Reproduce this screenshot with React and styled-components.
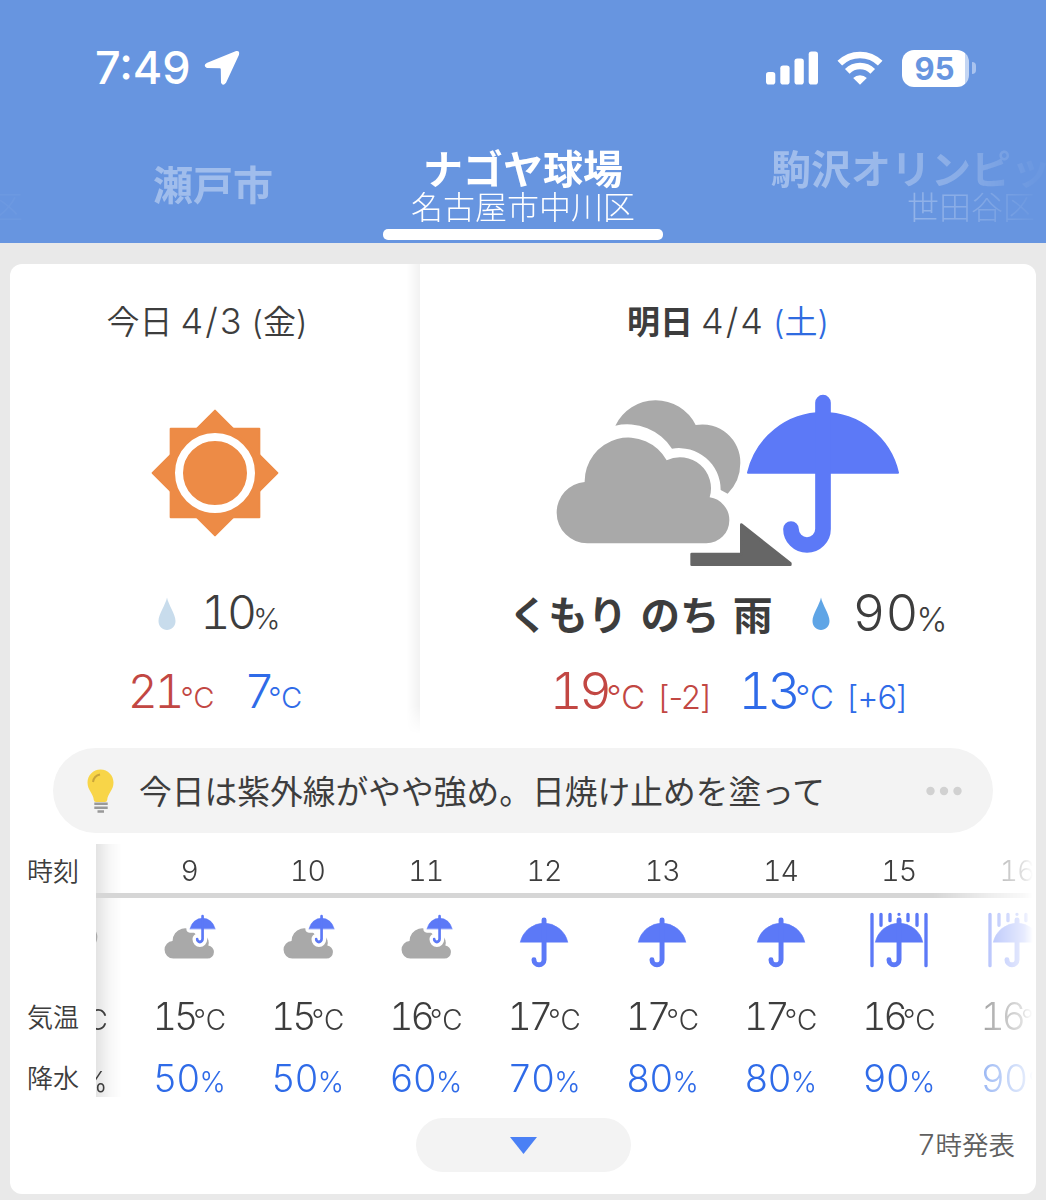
import React from 'react';
import styled, { createGlobalStyle } from 'styled-components';

const GlobalStyle = createGlobalStyle`
  * {
    box-sizing: border-box;
  }

  body {
    margin: 0;
    background-color: #e9e9e9;
    color: #3d3d3d;
    font-family: Inter, 'Noto Sans CJK JP', sans-serif;
    font-weight: 300;
  }
`;

const Screen = styled.div`
  display: flex;
  flex-direction: column;
  width: 1046px;
  height: 1200px;
  overflow: hidden;
  background-color: #e9e9e9;
`;

const Header = styled.header`
  display: flex;
  flex-direction: column;
  height: 243px;
  background-color: #6795e0;
  color: white;
`;

const StatusBar = styled.div`
  display: flex;
  align-items: center;
  height: 136px;
  padding: 0 70px 0 95px;
`;

const Clock = styled.span`
  margin-right: 13px;
  font-size: 45px;
  font-weight: 550;
  line-height: 136px;
`;

const StatusIcons = styled.div`
  display: flex;
  align-items: center;
  gap: 19px;
  margin-left: auto;
`;

const Battery = styled.div`
  display: flex;
  align-items: center;
  gap: 3px;
`;

const BatteryBody = styled.div`
  width: 67px;
  height: 37px;
  border-radius: 12px;
  background: linear-gradient(to right, white 94%, #c3d5f3 94%);
  color: #6795e0;
  font-size: 31px;
  font-weight: 650;
  line-height: 37px;
  text-align: center;
  padding-right: 2px;
`;

const BatteryCap = styled.div`
  width: 4px;
  height: 12px;
  border-radius: 0 4px 4px 0;
  background-color: #a9c3ef;
`;

const Tabs = styled.nav`
  display: flex;
  height: 107px;
  overflow: hidden;
  mask-image: linear-gradient(
    to right,
    rgba(0, 0, 0, 0.1) 20px,
    black 160px,
    black 840px,
    rgba(0, 0, 0, 0.55) 970px,
    rgba(0, 0, 0, 0.08) 1035px
  );
`;

const Tab = styled.div`
  display: flex;
  flex-direction: column;
  flex: none;
  align-items: center;
  width: ${(props) => props.$width}px;
  margin-right: 30px;
  padding-top: ${(props) => props.$top}px;
  color: ${(props) => (props.$active ? 'white' : 'rgba(255, 255, 255, 0.38)')};
  white-space: nowrap;
`;

const EdgeTab = styled(Tab)`
  align-items: flex-end;
  margin-right: 50px;
`;

const TabName = styled.div`
  height: 40px;
  font-size: 40px;
  font-weight: 700;
  line-height: 42px;
`;

const TabArea = styled.div`
  height: 38px;
  font-size: 32px;
  line-height: 38px;
`;

const TabLine = styled.div`
  width: 280px;
  height: 11px;
  margin-top: 2px;
  border-radius: 5px;
  background-color: white;
`;

const Card = styled.main`
  display: flex;
  flex-direction: column;
  width: 1026px;
  height: 930px;
  margin: 21px 10px 0;
  border-radius: 12px;
  background-color: white;
  overflow: hidden;
`;

const Days = styled.section`
  display: flex;
  height: 484px;
`;

const Day = styled.div`
  display: flex;
  flex-direction: column;
  width: ${(props) => props.$width}px;
`;

const PanelShade = styled.div`
  width: 14px;
  height: 470px;
  margin-left: -14px;
  background: linear-gradient(to right, rgba(0, 0, 0, 0), rgba(0, 0, 0, 0.05));
  mask-image: linear-gradient(to bottom, black 94%, transparent);
`;

const DateRow = styled.div`
  display: flex;
  align-items: baseline;
  justify-content: center;
  gap: 8px;
  height: 114px;
  padding-right: ${(props) => props.$shift || 0}px;
  font-size: 33px;
  font-weight: 350;
  line-height: 115px;
`;

const DayName = styled.span`
  font-weight: ${(props) => (props.$bold ? 700 : 350)};
`;

const DayNumber = styled.span`
  font-size: 36px;
  font-weight: 300;
  letter-spacing: 2px;
`;

const Weekday = styled.span`
  color: ${(props) => (props.$saturday ? '#2f6be0' : '#3d3d3d')};
`;

const IconRow = styled.div`
  display: flex;
  align-items: center;
  justify-content: center;
  height: 190px;
  padding-top: ${(props) => props.$drop}px;
`;

const RainRow = styled.div`
  display: flex;
  align-items: center;
  justify-content: center;
  height: 90px;
  padding-top: 5px;
  padding-left: ${(props) => props.$indent || 0}px;
`;

const TempRow = styled.div`
  display: flex;
  align-items: center;
  justify-content: center;
  gap: ${(props) => props.$gap}px;
  height: 70px;
  padding-top: 3px;
`;

const Telop = styled.span`
  margin-right: 40px;
  font-size: 39.5px;
  font-weight: 700;
  line-height: 90px;
  word-spacing: 4px;
`;

const Value = styled.span`
  display: flex;
  align-items: baseline;
  color: ${(props) => props.$color || '#3d3d3d'};
  font-size: ${(props) => props.$size}px;
  font-variant-numeric: tabular-nums;
  letter-spacing: ${(props) => props.$tight || 0}em;
  line-height: 70px;
`;

const Unit = styled.span`
  margin-left: ${(props) => props.$gap || 0}px;
  font-size: ${(props) => props.$size}px;
  letter-spacing: 0;
`;

const Diff = styled.span`
  margin-left: 13px;
  font-size: 32.5px;
  font-variant-numeric: normal;
  letter-spacing: -1px;
`;

const Tip = styled.section`
  display: flex;
  align-items: center;
  width: 940px;
  height: 85px;
  margin: 0 43px;
  padding: 0 31px 0 34px;
  border-radius: 43px;
  background-color: #f3f3f3;
`;

const TipText = styled.p`
  flex: 1;
  margin: 0 0 0 25px;
  padding-top: 3px;
  font-size: 32.75px;
  font-weight: 400;
  line-height: 85px;
  white-space: nowrap;
`;

const Hourly = styled.section`
  display: flex;
  height: 253px;
  margin-top: 11px;
`;

const Labels = styled.div`
  flex: none;
  width: 86px;
  padding-left: 17px;
  font-size: 26px;
  font-weight: 350;
`;

const HourScroll = styled.div`
  display: flex;
  width: 940px;
  overflow: hidden;
  background: linear-gradient(to right, rgba(0, 0, 0, 0.11), rgba(0, 0, 0, 0.03) 14px, rgba(0, 0, 0, 0) 26px);
  mask-image: linear-gradient(
    to right,
    black 837px,
    rgba(0, 0, 0, 0.42) 893px,
    rgba(0, 0, 0, 0.15) 928px,
    transparent 937px
  );
`;

const HourStrip = styled.div`
  display: flex;
  flex: none;
  margin-left: -84px;
`;

const HourColumn = styled.div`
  flex: none;
  width: 118.25px;
`;

const Cell = styled.div`
  display: flex;
  align-items: center;
  justify-content: center;
  height: ${(props) => props.$height}px;
`;

const LabelCell = styled(Cell)`
  justify-content: flex-start;
`;

const HourCell = styled(Cell)`
  padding-top: 4px;
  font-size: 28.5px;
  font-variant-numeric: tabular-nums;
  letter-spacing: -0.03em;
`;

const Rule = styled.div`
  height: 5px;
  background-color: #d6d6d6;
`;

const Footer = styled.footer`
  display: grid;
  grid-template-columns: 1fr 215px 1fr;
  align-items: center;
  height: 54px;
  margin-top: 21px;
`;

const MoreButton = styled.button`
  display: flex;
  align-items: center;
  justify-content: center;
  grid-column: 2;
  height: 54px;
  border: none;
  border-radius: 27px;
  background-color: #f3f3f3;
`;

const Updated = styled.span`
  padding-right: 21px;
  color: #606060;
  font-size: 26.5px;
  font-weight: 350;
  line-height: 50px;
  text-align: right;
`;

const UpdatedHour = styled.span`
  margin-right: 1px;
  font-size: 29px;
  font-weight: 300;
`;

const RED = '#c24743';
const BLUE = '#2f6be8';

const hours = [
  { hour: '', icon: 'cloudy', temp: 14, rain: 30 },
  { hour: '9', icon: 'cloudRain', temp: 15, rain: 50 },
  { hour: '10', icon: 'cloudRain', temp: 15, rain: 50 },
  { hour: '11', icon: 'cloudRain', temp: 16, rain: 60 },
  { hour: '12', icon: 'rain', temp: 17, rain: 70 },
  { hour: '13', icon: 'rain', temp: 17, rain: 80 },
  { hour: '14', icon: 'rain', temp: 17, rain: 80 },
  { hour: '15', icon: 'heavy', temp: 16, rain: 90 },
  { hour: '16', icon: 'heavy', temp: 16, rain: 90 },
];

const FRONT_CLOUD =
  'M173 522 A92 92 0 0 1 81 430 A92 92 0 0 1 165 338 A131 131 0 0 1 411 273 A93 93 0 0 1 540 384 A69 69 0 0 1 599 453 A69 69 0 0 1 530 522 Z';
const BACK_CLOUD =
  'M257 169 A134 134 0 0 1 498 167 A114 114 0 0 1 632 281 A130 130 0 0 1 594 373 L573 362 A125 125 0 0 0 427 238 A161 161 0 0 0 257 169 Z';
const CANOPY = 'M655 310 A231 231 0 0 1 1105 310 Z';
const HANDLE = 'M880 100 V479 A48 48 0 0 1 784 479';

function Umbrella({ color = '#5c79f7', halo = 0 }) {
  return (
    <g stroke={color} strokeLinecap="round" strokeLinejoin="round">
      <path d={CANOPY} fill={color} strokeWidth={6 + halo} />
      <path d={HANDLE} fill="none" strokeWidth={47 + halo} />
    </g>
  );
}

function SunIcon() {
  return (
    <svg width="128" height="128" viewBox="-192 -192 384 384">
      <g fill="#ed8b46" stroke="#ed8b46" strokeWidth="6" strokeLinejoin="round">
        <rect x="-133" y="-133" width="266" height="266" />
        <path d="M0 -187 L187 0 L0 187 L-187 0 Z" />
      </g>
      <circle r="108" fill="none" stroke="white" strokeWidth="24" />
    </svg>
  );
}

function CloudThenRainIcon() {
  return (
    <svg width="346" height="176" viewBox="76 68 1038 528">
      <path d={BACK_CLOUD} fill="#a9a9a9" />
      <path d={FRONT_CLOUD} fill="#a9a9a9" />
      <path
        d="M486 554 H635 V466 L782 582 V586 H486 Z"
        fill="#666666"
        stroke="#666666"
        strokeWidth="8"
        strokeLinejoin="round"
      />
      <Umbrella />
    </svg>
  );
}

function HourIcon({ type }) {
  return (
    <svg width="60" height="56" viewBox="0 0 180 168">
      {type === 'cloudy' && (
        <g transform="translate(-11 -5) scale(0.285)" fill="#a9a9a9">
          <path d={BACK_CLOUD} />
          <path d={FRONT_CLOUD} />
        </g>
      )}
      {type === 'cloudRain' && (
        <>
          <path d={FRONT_CLOUD} fill="#a9a9a9" transform="translate(-6.5 -9.6) scale(0.286)" />
          <g transform="translate(-18 -5.5) scale(0.169 0.181)">
            <Umbrella color="white" halo={120} />
            <Umbrella />
          </g>
        </>
      )}
      {type === 'rain' && (
        <g transform="translate(-187.5 -8) scale(0.3155)">
          <Umbrella />
        </g>
      )}
      {type === 'heavy' && (
        <>
          <g stroke="#5c79f7" strokeWidth="10" strokeLinecap="round">
            <path d="M9 7 V161 M171 7 V161 M36 7 V40 M144 7 V40 M63 7 V26 M117 7 V26 M90 7 V7.1" />
          </g>
          <g transform="translate(-187.5 -8) scale(0.3155)">
            <Umbrella color="white" halo={18} />
            <Umbrella />
          </g>
        </>
      )}
    </svg>
  );
}

const Drop = styled.svg`
  margin-right: ${(props) => props.$gap}px;
  margin-bottom: 3px;
`;

function DropIcon({ color, gap }) {
  return (
    <Drop $gap={gap} width="18" height="34" viewBox="0 0 18 34">
      <path d="M9 0.5 C10.5 8 17.5 17 17.5 24 C17.5 29.5 13.5 33 9 33 C4.5 33 0.5 29.5 0.5 24 C0.5 17 7.5 8 9 0.5 Z" fill={color} />
    </Drop>
  );
}

function LocationIcon() {
  return (
    <svg width="36" height="36" viewBox="0 0 36 36">
      <path
        d="M32.5 2 L3 14 Q0.5 15.5 3 17 L16 17.3 Q17.8 17.5 17.8 19.5 L18 32.5 Q19 35 21 32.5 L34 4.5 Q34.8 1.5 32.5 2 Z"
        fill="white"
        stroke="white"
        strokeWidth="2"
        strokeLinejoin="round"
      />
    </svg>
  );
}

function SignalIcon() {
  return (
    <svg width="52" height="34" viewBox="0 0 52 34" fill="white">
      <rect x="0" y="21" width="9.3" height="12.5" rx="2.8" />
      <rect x="14.3" y="14.5" width="9.3" height="19" rx="2.8" />
      <rect x="28.5" y="7.5" width="9.3" height="26" rx="2.8" />
      <rect x="42.7" y="0.5" width="9.3" height="33" rx="2.8" />
    </svg>
  );
}

function WifiIcon() {
  return (
    <svg width="46" height="34" viewBox="0 0 46 34">
      <g fill="none" stroke="white" strokeWidth="6.6">
        <path d="M2.8 12.2 A29 29 0 0 1 43.2 12.2" />
        <path d="M10.3 20.3 A18 18 0 0 1 35.7 20.3" />
      </g>
      <path d="M16.2 27 A10 10 0 0 1 29.8 27 L23 33.8 Z" fill="white" />
    </svg>
  );
}

function BulbIcon() {
  return (
    <svg width="27" height="44" viewBox="0 0 27 44">
      <path d="M13.5 0.5 C6 0.5 0.5 6.5 0.5 13.5 C0.5 21.5 6.5 24.5 6.8 31 Q7 33 9 33 H18 Q20 33 20.2 31 C20.5 24.5 26.5 21.5 26.5 13.5 C26.5 6.5 21 0.5 13.5 0.5 Z" fill="#f8d548" />
      <path d="M6 13 C6.5 9.5 9 6.5 13 5.6" fill="none" stroke="#c9a53a" strokeWidth="2" />
      <path d="M7.3 34.7 H20.7 M7.3 38.7 H20.7" stroke="#999999" strokeWidth="2.5" />
      <path d="M10.5 42.5 H17" stroke="#999999" strokeWidth="2.5" />
    </svg>
  );
}

function App() {
  return (
    <>
      <GlobalStyle />
      <Screen>
        <Header>
          <StatusBar>
            <Clock>7:49</Clock>
            <LocationIcon />
            <StatusIcons>
              <SignalIcon />
              <WifiIcon />
              <Battery>
                <BatteryBody>95</BatteryBody>
                <BatteryCap />
              </Battery>
            </StatusIcons>
          </StatusBar>
          <Tabs>
            <EdgeTab $width={23} $top={53}>
              <TabArea>区</TabArea>
            </EdgeTab>
            <Tab $width={280} $top={29}>
              <TabName>瀬戸市</TabName>
            </Tab>
            <Tab $width={280} $top={13} $active>
              <TabName>ナゴヤ球場</TabName>
              <TabArea>名古屋市中川区</TabArea>
              <TabLine />
            </Tab>
            <Tab $width={556} $top={13}>
              <TabName>駒沢オリンピック公園</TabName>
              <TabArea>世田谷区</TabArea>
            </Tab>
          </Tabs>
        </Header>
        <Card>
          <Days>
            <Day $width={410}>
              <DateRow $shift={16}>
                <DayName>今日</DayName>
                <DayNumber>4/3</DayNumber>
                <Weekday>(金)</Weekday>
              </DateRow>
              <IconRow $drop={0}>
                <SunIcon />
              </IconRow>
              <RainRow $indent={8}>
                <DropIcon color="#c8dcec" gap={25} />
                <Value $size={46.5} $tight={-0.08}>
                  10<Unit $size={29}>%</Unit>
                </Value>
              </RainRow>
              <TempRow $gap={30}>
                <Value $size={46.5} $color={RED} $tight={-0.07}>
                  21<Unit $size={29} $gap={-1}>℃</Unit>
                </Value>
                <Value $size={46.5} $color={BLUE} $tight={-0.07}>
                  7<Unit $size={29} $gap={-3}>℃</Unit>
                </Value>
              </TempRow>
            </Day>
            <PanelShade />
            <Day $width={616}>
              <DateRow>
                <DayName $bold>明日</DayName>
                <DayNumber>4/4</DayNumber>
                <Weekday $saturday>(土)</Weekday>
              </DateRow>
              <IconRow $drop={14}>
                <CloudThenRainIcon />
              </IconRow>
              <RainRow>
                <Telop>くもり のち 雨</Telop>
                <DropIcon color="#5fa5e6" gap={22} />
                <Value $size={51}>
                  90<Unit $size={33} $gap={-2}>%</Unit>
                </Value>
              </RainRow>
              <TempRow $gap={28}>
                <Value $size={51} $color={RED} $tight={-0.07}>
                  19<Unit $size={33} $gap={-2}>℃</Unit>
                  <Diff>[-2]</Diff>
                </Value>
                <Value $size={51} $color={BLUE} $tight={-0.07}>
                  13<Unit $size={33} $gap={-2}>℃</Unit>
                  <Diff>[+6]</Diff>
                </Value>
              </TempRow>
            </Day>
          </Days>
          <Tip>
            <BulbIcon />
            <TipText>今日は紫外線がやや強め。日焼け止めを塗って</TipText>
            <svg width="36" height="10" viewBox="0 0 36 10" fill="#d1d1d1">
              <circle cx="4.5" cy="5" r="4.2" />
              <circle cx="18" cy="5" r="4.2" />
              <circle cx="31.5" cy="5" r="4.2" />
            </svg>
          </Tip>
          <Hourly>
            <Labels>
              <LabelCell $height={51}>時刻</LabelCell>
              <LabelCell $height={90} />
              <LabelCell $height={60}>気温</LabelCell>
              <LabelCell $height={63}>降水</LabelCell>
            </Labels>
            <HourScroll>
              <HourStrip>
                {hours.map((item, index) => (
                  <HourColumn key={index}>
                    <HourCell $height={49}>{item.hour}</HourCell>
                    <Rule />
                    <Cell $height={83}>
                      <HourIcon type={item.icon} />
                    </Cell>
                    <Cell $height={75}>
                      <Value $size={37.5} $tight={-0.08}>
                        {item.temp}
                        <Unit $size={28} $gap={-2}>℃</Unit>
                      </Value>
                    </Cell>
                    <Cell $height={49}>
                      <Value $size={37.5} $color={item.rain >= 50 ? BLUE : undefined} $tight={-0.03}>
                        {item.rain}
                        <Unit $size={28}>%</Unit>
                      </Value>
                    </Cell>
                  </HourColumn>
                ))}
              </HourStrip>
            </HourScroll>
          </Hourly>
          <Footer>
            <MoreButton>
              <svg width="27" height="17" viewBox="0 0 27 17">
                <path d="M0 0 H27 L13.5 17 Z" fill="#4a80f5" />
              </svg>
            </MoreButton>
            <Updated>
              <UpdatedHour>7</UpdatedHour>時発表
            </Updated>
          </Footer>
        </Card>
      </Screen>
    </>
  );
}

export default App;
